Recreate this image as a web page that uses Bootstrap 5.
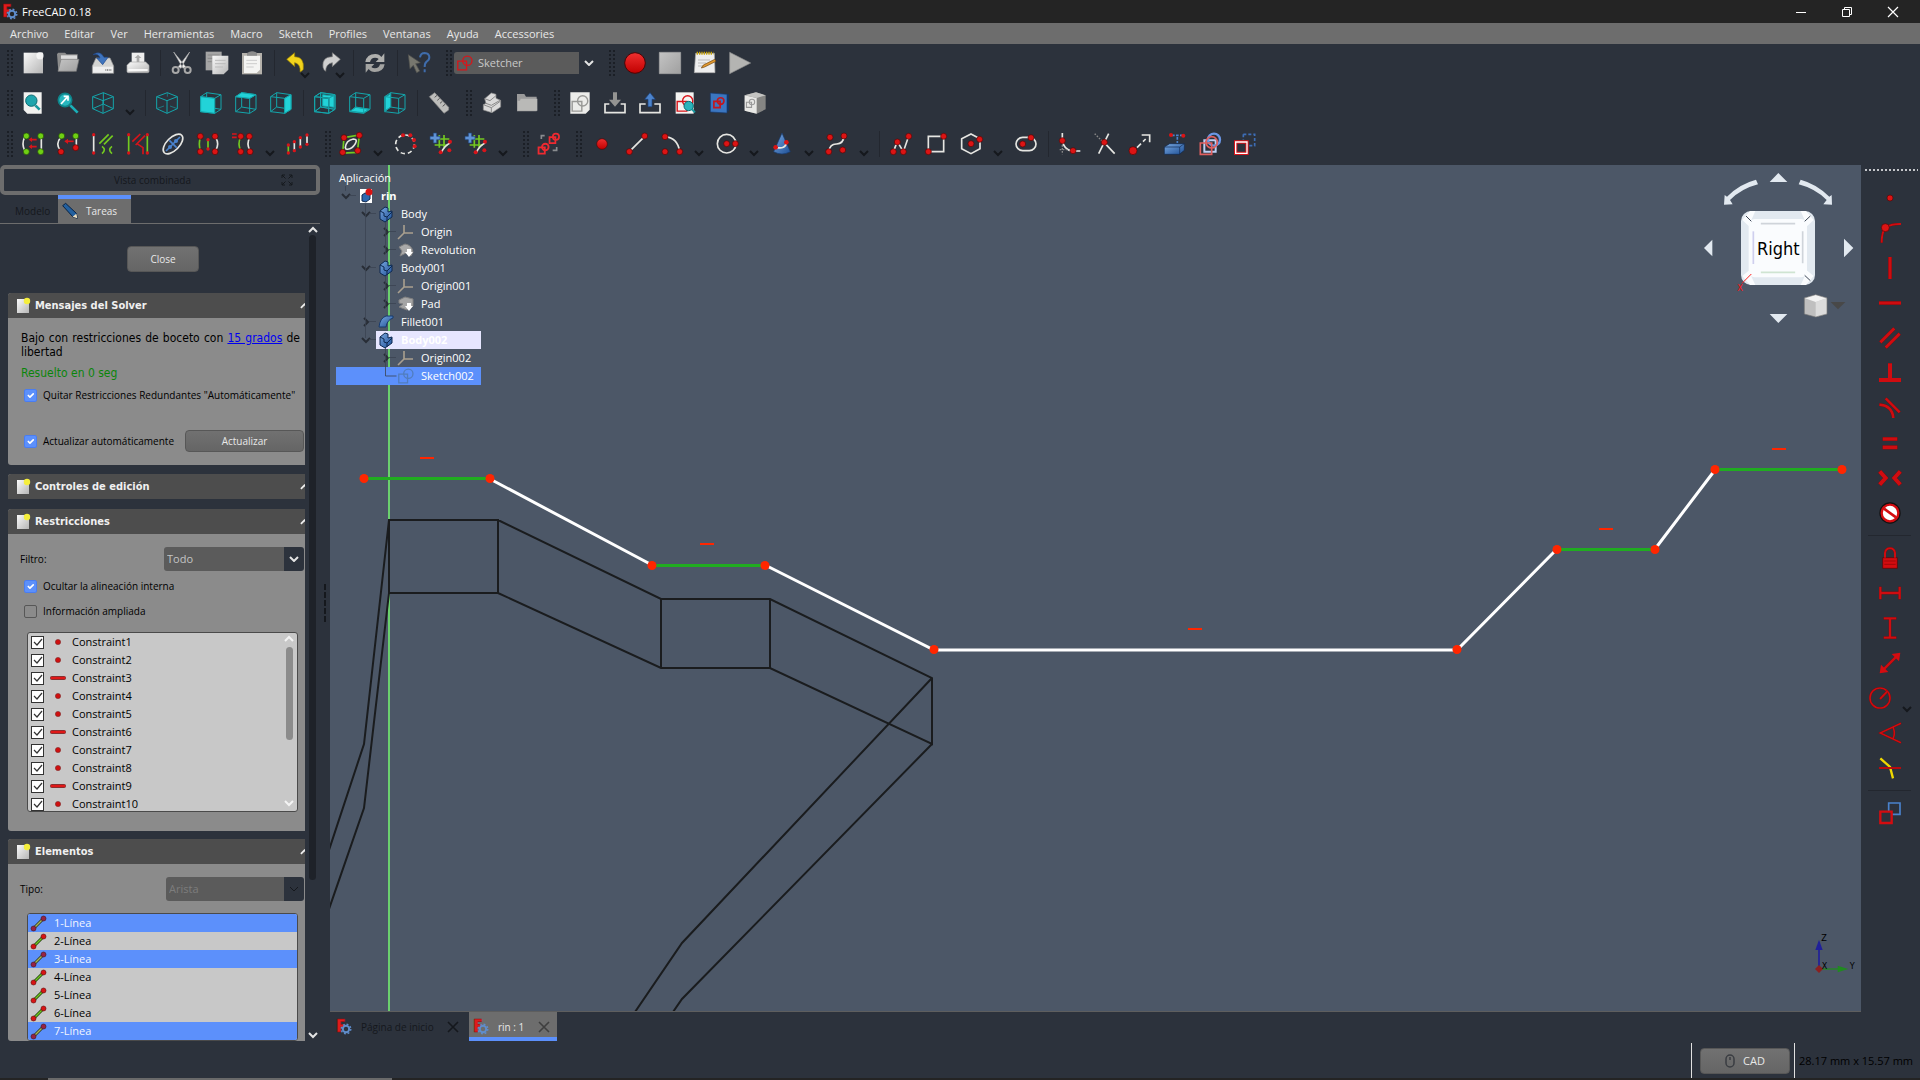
<!DOCTYPE html>
<html lang="es">
<head>
<meta charset="utf-8">
<meta name="viewport" content="width=device-width, initial-scale=1">
<title>FreeCAD 0.18</title>
<link href="https://cdn.jsdelivr.net/npm/bootstrap@5.3.0/dist/css/bootstrap.min.css" rel="stylesheet">
<style>
:root{--dock:#2c323c;--bar:#6d6d6d;--blue:#5c90fb;--ink:#15181d}
body{background:var(--dock);color:#e4e4e4;font:11px/14px "Open Sans","Noto Sans",sans-serif;overflow:hidden}
button{font:inherit;color:inherit}
svg{display:block;flex:none;overflow:visible}
.titlebar{background:#242424;height:23px;padding-left:2px;color:#fff}
.winbtn{width:46px;height:23px;border:0;background:none;color:#fff;padding:0}
.menubar{background:var(--bar);height:21px;padding-left:2px}
.menubar a{color:#e8e8e8;text-decoration:none;padding:0 8px;line-height:21px}
.toolrow{height:41px;padding-bottom:2px}
.toolrow:first-child{height:39px}
.tool{width:35px;height:35px;border:0;background:none;padding:0;display:flex;align-items:center;justify-content:center;position:relative}
.tool .more{position:absolute;right:3px;bottom:2px}
.drop{width:20px;height:35px;border:0;background:none;padding:19px 0 0 0;display:flex;align-items:center;justify-content:center}
.rule{width:9px;height:26px;flex:none;background:linear-gradient(#23272f,#23272f) 5px 0/1px 100% no-repeat}
.grip{width:18px;height:28px;flex:none;background:radial-gradient(circle,#1b1f26 1px,transparent 1px) right 1px top 0/4px 4px;background-clip:content-box;padding-left:9px}
.grip:first-child{width:15px;padding-left:7px}
.wb{height:22px;width:145px;border:0;border-radius:3px;color:#c9c9c9;appearance:none;padding:0 0 0 24px;
 background:url("data:image/svg+xml,%3Csvg xmlns='http://www.w3.org/2000/svg' viewBox='0 0 10 6'%3E%3Cpath d='M1 1l4 4 4-4' fill='none' stroke='%23e4e4e4' stroke-width='2'/%3E%3C/svg%3E") 130px 8px/10px 6px no-repeat,linear-gradient(#5b5b5b,#5b5b5b) 0 0/125px 100% no-repeat}
.wbicon{position:absolute;left:3px;top:3px;pointer-events:none}
.dock{width:330px;font:10px/14px "Open Sans","Noto Sans",sans-serif;color:#000}
.docktitle{width:320px;height:30px;border:4px solid var(--bar);border-radius:5px;color:var(--ink);padding-right:23px;padding-left:110px}
.docktabs{width:320px;height:29px;border-bottom:1px solid var(--bar)}
.docktab{border:0;background:none;padding:4px 0 0 15px;width:58px;text-align:left;color:var(--ink)}
.docktab.on{background:var(--bar);border-top:4px solid var(--blue);color:#e8e8e8;padding:0 0 0 4px;width:73px}
.scrollbody{width:320px}
.groups{width:305px;overflow:hidden;padding-left:8px}
.sbar{width:15px;padding:3px 0 3px}
.thumb{width:7px;height:645px;background:#1e2229;border-radius:4px;margin-top:2px}
.pbtn{border:1px solid #575757;border-radius:4px;background:linear-gradient(#717171,#656565);color:#e8e8e8;padding:0;text-align:center}
.close{width:72px;height:26px;margin:22px 0 21px 119px}
.grp{background:#8b8b8b;border-radius:3px 0 0 3px;margin-bottom:9px}
.grphead{height:25px;background:#4d4d4d;color:#f0f0f0;font:700 11px/14px "DejaVu Sans Condensed","DejaVu Sans",sans-serif;border-radius:3px 0 0 0;padding-left:9px}
.grphead .fold{margin-right:-4px}
.rich{font:12px/14px "DejaVu Sans Condensed","DejaVu Sans",sans-serif}
.dofmsg{text-align:justify;margin:0 5px 7px 13px;padding-top:13px}
.solved{color:#0a850a;margin:0 0 8px 13px}
.dofmsg a{color:#0000f0}
.tick{width:13px;height:13px;margin:0 6px 0 0;border:1px solid #575757;border-radius:2px!important;background-color:transparent;flex:none;float:none}
.tick:checked{background-color:var(--blue);border-color:#4a7df0}
.tick2{width:13px;height:13px;margin:0;border:1px solid #333;border-radius:0!important;background-color:#fff;flex:none}
.tick2:checked{border-color:#333;background-color:#fff;background-image:url("data:image/svg+xml,%3Csvg xmlns='http://www.w3.org/2000/svg' viewBox='0 0 11 11'%3E%3Cpath d='M2 5l3 3 5-6' fill='none' stroke='%23333' stroke-width='1.2'/%3E%3C/svg%3E")}
.ck{height:14px;margin-left:16px}
.combo{height:24px;width:140px;border:0;border-radius:3px;color:#c4c4c4;appearance:none;padding:0 0 0 3px;margin-right:1px;font-size:11px;
 background:url("data:image/svg+xml,%3Csvg xmlns='http://www.w3.org/2000/svg' viewBox='0 0 10 6'%3E%3Cpath d='M1 1l4 4 4-4' fill='none' stroke='%23e4e4e4' stroke-width='2'/%3E%3C/svg%3E") right 5px center/10px 6px no-repeat,linear-gradient(var(--dock),var(--dock)) right/20px 100% no-repeat,#5b5b5b}
.combo:disabled{opacity:1;width:138px;color:#7d7d7d;background:url("data:image/svg+xml,%3Csvg xmlns='http://www.w3.org/2000/svg' viewBox='0 0 10 6'%3E%3Cpath d='M1 1l4 4 4-4' fill='none' stroke='%2315181d' stroke-width='1'/%3E%3C/svg%3E") right 5px center/10px 6px no-repeat,linear-gradient(var(--dock),var(--dock)) right/20px 100% no-repeat,#5b5b5b}
.box{width:271px;margin-left:19px;border:1px solid #4a4a4a;border-radius:3px;background:#c8c8c8;font:11px/18px "Open Sans","Noto Sans",sans-serif;overflow:hidden}
.cons{height:180px}
.cons label,.elem li{height:18px}
.cons label{padding-left:3px}
.cons label svg{margin:0 6px}
.elem li{padding-left:3px;gap:8px}
.elem .sel{background:var(--blue);color:#f2f5ff}
.elem .sel svg{filter:hue-rotate(-20deg) saturate(.55)}
.thumb2{width:7px;height:93px;background:#8b8b8b;border-radius:4px;margin:5px 0 60px}
.splitter{width:5px;height:39px;background:repeating-linear-gradient(#15181d 0 6px,transparent 6px 8px) center/2px 100% no-repeat;position:absolute;left:322px;top:419px}
.stage{background:#4c5767;overflow:hidden;border-bottom:1px solid #5e5e5e}
.scene{position:absolute;inset:0;width:100%;height:100%}
.tree{position:absolute;left:6px;top:4px;width:145px;line-height:18px;color:#fff;margin:0;padding:0;list-style:none}
.tree li{display:flex;height:18px;align-items:center;position:relative;white-space:nowrap}
.tree .tw{width:20px;display:flex;justify-content:center;opacity:.65}
.tree .ic{width:20px;margin-right:5px;display:flex;justify-content:center}
.tree .l1{padding-left:20px}.tree .l2{padding-left:40px}
.tree .hot{background:linear-gradient(#e6e6ff,#e6e6ff) right/105px 100% no-repeat;font-weight:700}
.tree .pick{background:var(--blue)}
.treelines{position:absolute;left:6px;top:4px;margin-left:-6px;margin-top:-5px}
.cube{position:absolute;right:0;top:0}
.axes{position:absolute;right:0;bottom:0}
.doctabs{height:29px;font:10px/14px "Open Sans","Noto Sans",sans-serif}
.doctab{border:0;background:none;color:var(--ink);width:139px;padding:0 11px 0 6px}
.doctab.on{background:var(--bar);color:#e8e8e8;width:88px;border-bottom:4px solid var(--blue);padding:4px 8px 0 4px}
.rightbar{width:59px;padding-right:2px}
.dots{width:53px;height:2px;margin:4px 0 9px 3px;background:repeating-linear-gradient(90deg,#c4c6ca 0 2px,transparent 2px 4px)}
.hrule{width:43px;height:10px;background:linear-gradient(#23272f,#23272f) 0 5px/100% 1px no-repeat}
.radial{width:54px;align-self:flex-end;display:flex}
.status{height:37px;padding:2px 5px 0 0;color:#000}
.vline{width:1px;background:#e0e0e0;height:35px}
.cad{width:90px;height:26px;margin:0 4px 0 8px}
.taskbar{height:2px;background:#242424;padding-left:48px}
.taskbar div{width:344px;background:#6a6a6a}
.dim{margin-left:4px;width:116px}
.w,.r,.g,.c,.k,.b{fill:none;stroke-width:5}
.w{stroke:#e6e6e2}.r{stroke:#d8141a}.g{stroke:#73c920}.c{stroke:#14a5ab;stroke-width:3}.k{stroke:#15181d}.b{stroke:#4a82cc}
.cf{fill:#22d3d8;stroke:#14a5ab;stroke-width:3}
.red{stroke:#cf0c10;stroke-width:6;fill:none;filter:drop-shadow(0 0 2px #4b0505)}
#sk *{stroke-width:var(--sw,5)}
</style>
</head>
<body class="vh-100 d-flex flex-column">
<svg width="0" height="0" class="position-absolute" aria-hidden="true"><defs>
<linearGradient id="gr" x2="1" y2="1"><stop stop-color="#fafafa"/><stop offset="1" stop-color="#b5b5b5"/></linearGradient>
<linearGradient id="gs" x2="1" y2="1"><stop stop-color="#c4c4c4"/><stop offset="1" stop-color="#a0a0a0"/></linearGradient>
<linearGradient id="gb" x2="1" y2="1"><stop stop-color="#79a8e0"/><stop offset="1" stop-color="#1d4f96"/></linearGradient>
<linearGradient id="rg" x2="0" y2="1"><stop stop-color="#f03030"/><stop offset="1" stop-color="#c00000"/></linearGradient>
<circle id="rd" r="9" fill="#dc1414" stroke="#520606" stroke-width="2"/>
<circle id="gd" r="9" fill="#6fd014" stroke="#234d05" stroke-width="2"/>
<g id="chev"><path d="M1 1l4 4 4-4" fill="none" stroke="#15181d" stroke-width="2"/></g>
<g id="logo"><text x="0" y="13" font-family="Open Sans,sans-serif" font-weight="800" font-size="17" fill="#e01b1b" stroke="#8a0a0a" stroke-width=".4">F</text><circle cx="10" cy="10" r="3.2" fill="none" stroke="#5f8dcb" stroke-width="2"/><circle cx="10" cy="10" r="4.8" fill="none" stroke="#5f8dcb" stroke-width="1.4" stroke-dasharray="1.9 1.87"/></g>
<g id="wire"><path class="c" d="M2 14L44 19V64L2 59zM2 14L20 2L63 8L44 19M63 8V52L44 64M20 2V45L2 59M20 45L63 52"/></g>
<g id="grid"><path class="g" d="M28 6v38M42 6v38M14 18h44M14 36h40" stroke-width="4"/><path d="M10 0h10v10h10v10H20v10H10V20H0V10h10z" fill="#5f93d6" stroke="#23457a" stroke-width="2"/></g>
<g id="page"><path d="M0 1h12v14H0z" fill="url(#gr)"/><circle cx="10" cy="3" r="3.2" fill="#f5ee3c"/></g>
<g id="body"><path d="M2 5l5-4 3 1v4l4-1v6l-7 5-5-3z" fill="url(#gb)" stroke="#0e2950"/><path d="M2 5l4 2v3l3 1 5-5M9 11v4" fill="none" stroke="#0e2950"/></g>
<g id="org"><path d="M6 1v8h9M6 9l-6 6" fill="none" stroke="#aaa08f" stroke-width="1.6"/></g>
<g id="seg"><path d="M2.500 12.500L12.500 2.500" stroke="#1f3d0a" stroke-width="3"/><path d="M2.500 12.500L12.500 2.500" stroke="#73c920" stroke-width="1.500"/><circle cx="2.500" cy="12.500" r="2.500" fill="#d81414" stroke="#5a1010" stroke-width=".6"/><circle cx="12.500" cy="2.500" r="2.500" fill="#d81414" stroke="#5a1010" stroke-width=".6"/></g>
<g id="cdot"><circle cx="8" cy="7" r="2.600" fill="#d00f0f" stroke="#7c2a2a" stroke-width=".6"/></g>
<g id="cbar"><rect x=".5" y="5.500" width="15" height="3" rx="1" fill="#e01818" stroke="#8a3030"/></g>
<g id="sk"><path d="M3 24h34v34H3z" fill="none"/><circle cx="40" cy="22" r="18" fill="none"/></g>
</defs></svg>

<header class="titlebar d-flex align-items-center">
 <svg width="16" height="16" viewBox="0 0 16 16"><use href="#logo"/></svg><span class="ms-1 flex-grow-1">FreeCAD 0.18</span>
 <button class="winbtn" aria-label="Minimizar"><svg class="mx-auto" width="10" height="10" viewBox="0 0 10 10"><path d="M0 5.500h10" stroke="#fff"/></svg></button>
 <button class="winbtn" aria-label="Restaurar"><svg class="mx-auto" width="10" height="10" viewBox="0 0 10 10"><path d="M.5 2.500h7v7h-7zM2.500 2.500v-2h7v7h-2" fill="none" stroke="#fff"/></svg></button>
 <button class="winbtn" aria-label="Cerrar"><svg class="mx-auto" width="10" height="10" viewBox="0 0 10 10"><path d="M0 0l10 10M10 0L0 10" stroke="#fff" stroke-width="1.200"/></svg></button>
 <span class="pe-1"></span>
</header>
<nav class="menubar d-flex" aria-label="Menú">
 <a href="#">Archivo</a><a href="#">Editar</a><a href="#">Ver</a><a href="#">Herramientas</a><a href="#">Macro</a><a href="#">Sketch</a><a href="#">Profiles</a><a href="#">Ventanas</a><a href="#">Ayuda</a><a href="#">Accessories</a>
</nav>

<div>
<div class="toolrow d-flex align-items-center">
 <span class="grip"></span>
 <button class="tool" aria-label="Nuevo"><svg width="22" height="22" viewBox="0 0 66 66"><path d="M5 2h58v62H5z" fill="url(#gr)"/><circle cx="54" cy="11" r="11" fill="#fff" opacity=".7"/></svg></button>
 <button class="tool" aria-label="Abrir"><svg width="22" height="22" viewBox="0 0 66 66"><path d="M0 6l4-4h20l5 5h33v20L52 58H4z" fill="#8d8d8d"/><path d="M12 10h48v14H12z" fill="#ddd"/><path d="M12 22h54l-8 36H3z" fill="url(#gs)" stroke="#777" stroke-width="2"/></svg></button>
 <button class="tool" aria-label="Guardar"><svg width="22" height="22" viewBox="0 0 66 66"><path d="M12 18h42l11 24v22H1V42z" fill="#d4d4d2" stroke="#999" stroke-width="2"/><path d="M3 44h60v18H3z" fill="#eee"/><path d="M40 54h20" stroke="#777" stroke-width="5" stroke-dasharray="3 2"/><path d="M3 8Q24-6 36 16h12L32 38 14 18h10Q20 4 3 8z" fill="#3f74bd" stroke="#1f478a" stroke-width="2"/></svg></button>
 <button class="tool" aria-label="Imprimir"><svg width="22" height="22" viewBox="0 0 66 66"><path d="M14 2h38v34H14z" fill="#eee"/><path d="M33 8l10 10h-6v12h-8V18h-6z" fill="#aaa"/><path d="M10 30h46l10 10v18q0 4-4 4H4q-4 0-4-4V40z" fill="url(#gr)" stroke="#aaa" stroke-width="2"/><path d="M4 54h58" stroke="#fff" stroke-width="5"/></svg></button>
 <span class="rule"></span>
 <button class="tool" aria-label="Cortar"><svg width="22" height="22" viewBox="0 0 66 66"><path d="M8 0l36 44-8 5zM56 0L22 44l8 5z" fill="#f0f0f0" stroke="#aaa" stroke-width="2"/><circle cx="14" cy="54" r="9" fill="none" stroke="#a8a8a8" stroke-width="6"/><circle cx="50" cy="54" r="9" fill="none" stroke="#a8a8a8" stroke-width="6"/></svg></button>
 <button class="tool" aria-label="Copiar"><svg width="24" height="24" viewBox="0 0 72 72"><path d="M2 2h48v56H2z" fill="#a5a5a5"/><path d="M8 12h36M8 22h20M8 32h12" stroke="#888" stroke-width="3"/><path d="M22 14h48v42L56 70H22z" fill="url(#gr)"/><path d="M30 28h32M30 38h32M30 48h24" stroke="#bbb" stroke-width="3"/></svg></button>
 <button class="tool" aria-label="Pegar"><svg width="22" height="24" viewBox="0 0 66 72"><path d="M3 6h60v64H3z" fill="#b5b2ac"/><path d="M9 14h48v42L47 66H9z" fill="#f4f4f2"/><path d="M18 14V6q15-10 30 0v8z" fill="#8c8c8c"/><path d="M16 28h32M16 38h32M16 48h22" stroke="#ccc" stroke-width="3"/></svg></button>
 <span class="rule"></span>
 <button class="tool" aria-label="Deshacer"><svg width="20" height="22" viewBox="0 0 60 66"><path d="M2 22L26 2v12q30 0 26 38-4 6-10 8Q44 36 26 32v12z" fill="#f2d31c" stroke="#8a7405" stroke-width="2"/></svg><svg class="more" width="10" height="6"><use href="#chev"/></svg></button>
 <button class="tool" aria-label="Rehacer"><svg width="20" height="22" viewBox="0 0 60 66"><path d="M58 22L34 2v12Q2 14 6 46q2 8 8 12Q14 36 34 32v12z" fill="#cfcfcf" stroke="#777" stroke-width="2"/></svg><svg class="more" width="10" height="6"><use href="#chev"/></svg></button>
 <span class="rule"></span>
 <button class="tool" aria-label="Actualizar vista"><svg width="22" height="22" viewBox="0 0 66 66"><path d="M4 30Q8 6 34 6q12 0 18 9l9-11v26H35l9-9q-4-4-11-4-12 0-15 13z" fill="#b0b0ae"/><path d="M62 37Q58 60 32 60q-12 0-18-9L5 62V36h26l-9 9q4 4 11 4 12 0 15-12z" fill="#a4a4a2"/></svg></button>
 <span class="rule"></span>
 <button class="tool" aria-label="Qué es esto"><svg width="22" height="22" viewBox="0 0 66 66"><path d="M1 8l36 24-14 3 12 22-9 5-10-22L6 50z" fill="#77776f" stroke="#51514d" stroke-width="2"/><path d="M36 16Q38 3 50 3q14 1 14 13 0 8-8 13-6 4-6 16M50 52v9" fill="none" stroke="#3f6cab" stroke-width="6"/></svg></button>
 <span class="grip"></span>
 <div class="position-relative"><select class="wb" aria-label="Banco de trabajo"><option>Sketcher</option></select><svg class="wbicon" width="16" height="16" viewBox="0 0 62 62"><use href="#sk" stroke="#d8151a"/></svg></div>
 <span class="grip"></span>
 <button class="tool" aria-label="Grabar macro"><svg width="22" height="22" viewBox="0 0 66 66"><circle cx="33" cy="33" r="31" fill="url(#rg)" stroke="#4b0505" stroke-width="3"/></svg></button>
 <button class="tool" aria-label="Detener macro"><svg width="22" height="22" viewBox="0 0 66 66"><path d="M1 1h64v64H1z" fill="url(#gs)" stroke="#a8a8a8" stroke-width="2"/></svg></button>
 <button class="tool" aria-label="Editar macros"><svg width="22" height="22" viewBox="0 0 66 66"><path d="M5 4h56l2 58H1z" fill="#eee" stroke="#aaa" stroke-width="2"/><path d="M8 4h50" stroke="#c9a40b" stroke-width="9" stroke-dasharray="4 3"/><path d="M12 24h36M12 33h24M12 42h20" stroke="#bbb" stroke-width="3"/><path d="M22 48l6-9 34-17 4 6-34 17z" fill="#e0982f" stroke="#6e430a" stroke-width="2"/></svg></button>
 <button class="tool" aria-label="Ejecutar macro"><svg width="22" height="22" viewBox="0 0 66 66"><path d="M2 1l63 32L2 65z" fill="#b4b4b2" stroke="#8d8d8d" stroke-width="2"/></svg></button>
</div>

<div class="toolrow d-flex align-items-center">
 <span class="grip"></span>
 <button class="tool" aria-label="Ajustar todo"><svg width="22" height="22" viewBox="0 0 66 66"><path d="M5 1h54v64H16L5 54z" fill="#f2f2f0"/><circle cx="28" cy="26" r="17" fill="#1fa5ad" stroke="#0c6b72" stroke-width="3"/><path d="M40 40l13 13" stroke="#17989f" stroke-width="8"/></svg></button>
 <button class="tool" aria-label="Ajustar selección"><svg width="22" height="22" viewBox="0 0 66 66"><circle cx="24" cy="24" r="20" fill="#27b6be" stroke="#0e8389" stroke-width="5"/><path d="M40 40l22 22" stroke="#1bb0b8" stroke-width="8"/><path d="M12 36L32 14M20 13h13v13" fill="none" stroke="#fff" stroke-width="5"/></svg></button>
 <button class="tool" aria-label="Estilo de dibujo"><svg width="22" height="22" viewBox="0 0 66 66"><path class="c" d="M2 14L34 2L64 14V50L33 64L2 50zM2 14L33 26L64 14M33 26V64M2 50L34 36L64 50M34 2V36"/></svg></button>
 <button class="drop" aria-label="Más estilos"><svg width="10" height="6"><use href="#chev"/></svg></button>
 <span class="rule"></span>
 <button class="tool" aria-label="Isométrica"><svg width="22" height="22" viewBox="0 0 66 66"><path class="c" d="M2 14L34 2L64 14V50L33 64L2 50zM2 14L33 26L64 14M33 26V64"/><path class="c" opacity=".6" d="M2 50L24 42M42 42L64 50M34 2V14"/></svg></button>
 <span class="rule"></span>
 <button class="tool" aria-label="Alzado"><svg width="22" height="22" viewBox="0 0 66 66"><use href="#wire"/><path class="cf" d="M2 14L44 19V64L2 59z"/></svg></button>
 <button class="tool" aria-label="Planta"><svg width="22" height="22" viewBox="0 0 66 66"><use href="#wire"/><path class="cf" d="M2 14L20 2L63 8L44 19z"/></svg></button>
 <button class="tool" aria-label="Derecha"><svg width="22" height="22" viewBox="0 0 66 66"><use href="#wire"/><path class="cf" d="M44 19L63 8V52L44 64z"/></svg></button>
 <span class="rule"></span>
 <button class="tool" aria-label="Posterior"><svg width="22" height="22" viewBox="0 0 66 66"><path class="cf" d="M26 8L60 12V46L26 42z"/><use href="#wire"/><path d="M2 14L44 19V64" fill="none" stroke="#1d5d66" stroke-width="4"/><use href="#wire"/></svg></button>
 <button class="tool" aria-label="Inferior"><svg width="22" height="22" viewBox="0 0 66 66"><path class="cf" d="M4 58L20 46L60 52L44 62z"/><use href="#wire"/></svg></button>
 <button class="tool" aria-label="Izquierda"><svg width="22" height="22" viewBox="0 0 66 66"><path class="cf" d="M4 16L20 5V45L4 56z"/><use href="#wire"/></svg></button>
 <span class="rule"></span>
 <button class="tool" aria-label="Medir"><svg width="22" height="22" viewBox="0 0 66 66"><path d="M4 14L20 2L62 46V54L48 64z" fill="#bdbdbb" stroke="#888" stroke-width="2"/><path d="M20 16l7-6M28 25l7-6M36 34l7-6M44 43l7-6" stroke="#555" stroke-width="3"/></svg></button>
 <span class="grip"></span>
 <button class="tool" aria-label="Crear pieza"><svg width="20" height="22" viewBox="0 0 60 66"><path d="M8 20L28 3l14 4v12l14 6v20L30 62 4 54V38l8-4z" fill="#dadada" stroke="#8a8a8a" stroke-width="2"/><path d="M8 20l16 6 18-15M12 34l16 6 26-15M4 38l24 9 28-20M28 47v14" fill="none" stroke="#8a8a8a" stroke-width="3"/></svg></button>
 <button class="tool" aria-label="Crear grupo"><svg width="22" height="22" viewBox="0 0 66 66"><path d="M3 6h22l5 8h32v44H3z" fill="#9a9a9a"/><path d="M14 20h50v36H5V26h7z" fill="#b9b9b7"/></svg></button>
 <span class="grip"></span>
 <button class="tool" aria-label="Crear croquis"><svg width="22" height="22" viewBox="0 0 66 66"><path d="M4 1h58v52L50 65H4z" fill="#ececea"/><g transform="translate(7 8) scale(.85)"><use href="#sk" stroke="#999997"/></g></svg></button>
 <button class="tool" aria-label="Editar croquis"><svg width="22" height="22" viewBox="0 0 66 66"><path d="M16 36H3v26h60V36H50" class="w"/><path d="M27 1h12v22h12L33 44 15 23h12z" fill="#949492"/></svg></button>
 <button class="tool" aria-label="Salir del croquis"><svg width="22" height="22" viewBox="0 0 66 66"><path d="M20 36H3v26h60V36H46" class="w"/><path d="M27 44V22H17L33 2l16 20H39v22z" fill="#4c83cb" stroke="#1d4480" stroke-width="2"/></svg></button>
 <button class="tool" aria-label="Ver croquis"><svg width="22" height="22" viewBox="0 0 66 66"><path d="M5 1h54v64H5z" fill="#f4f4f2"/><g transform="translate(7 8) scale(.85)"><use href="#sk" stroke="#d8141a"/></g><circle cx="44" cy="42" r="14" fill="#2bb4bb" stroke="#0c6b72" stroke-width="3"/><path d="M53 51l10 10" stroke="#17989f" stroke-width="6"/></svg></button>
 <button class="tool" aria-label="Ver sección"><svg width="22" height="22" viewBox="0 0 66 66"><path d="M14 6h46v52H14z" fill="#16355f"/><path d="M4 3l50 4v56L4 60z" fill="#3b76c0" stroke="#173a6d" stroke-width="2"/><g transform="translate(13 15) scale(.55)" style="--sw:9"><use href="#sk" stroke="#c4161c"/></g></svg></button>
 <button class="tool" aria-label="Asignar croquis a cara"><svg width="22" height="22" viewBox="0 0 66 66"><path d="M2 10L36 1l29 9v42L38 65 2 56z" fill="#858583"/><path d="M2 10L38 18V65L2 56z" fill="#e8e8e6"/><path d="M2 10L36 1l29 9-27 8z" fill="#c4c4c2"/><g transform="translate(6 20) scale(.45)" style="--sw:7"><use href="#sk" stroke="#999"/></g></svg></button>
</div>

<div class="toolrow d-flex align-items-center">
 <span class="grip"></span>
 <button class="tool" aria-label="Cerrar forma"><svg width="22" height="22" viewBox="0 0 66 66"><path class="w" d="M8 12Q-2 33 8 52M58 12V52"/><path class="r" d="M24 20h20M24 41h20"/><path d="M20 20l10-7v14zM20 41l10-7v14z" fill="#d8141a"/><use href="#gd" x="13" y="9"/><use href="#gd" x="56" y="9"/><use href="#gd" x="13" y="56"/><use href="#gd" x="56" y="56"/></svg></button>
 <button class="tool" aria-label="Conectar aristas"><svg width="22" height="22" viewBox="0 0 66 66"><path class="w" d="M12 12Q-6 33 10 52M58 12V40"/><path class="r" d="M26 25h24"/><path d="M22 25l11-8v16z" fill="#d8141a"/><use href="#gd" x="14" y="9"/><use href="#gd" x="56" y="9"/><use href="#rd" x="12" y="56"/><use href="#rd" x="56" y="44"/></svg></button>
 <button class="tool" aria-label="Seleccionar restricciones"><svg width="22" height="22" viewBox="0 0 66 66"><path class="w" d="M5 6v54"/><path class="g" d="M22 32L50 4M36 34L62 8M30 40q14 10 0 22M60 40q-14 10 0 22"/><circle cx="5" cy="5" r="5" fill="#d8141a"/><circle cx="5" cy="60" r="5" fill="#d8141a"/></svg></button>
 <button class="tool" aria-label="Seleccionar elementos"><svg width="22" height="22" viewBox="0 0 66 66"><path class="g" d="M5 6v54M61 6v54"/><path class="r" d="M16 26L40 3M26 36L54 8M30 32L48 44V64"/><circle cx="5" cy="5" r="5" fill="#d8141a"/><circle cx="5" cy="60" r="5" fill="#d8141a"/><circle cx="61" cy="5" r="5" fill="#d8141a"/><circle cx="61" cy="60" r="5" fill="#d8141a"/></svg></button>
 <button class="tool" aria-label="Geometría interna"><svg width="22" height="22" viewBox="0 0 66 66"><ellipse class="w" cx="33" cy="33" rx="37" ry="19" transform="rotate(-45 33 33)"/><path class="b" d="M12 54L54 12M22 22l22 22"/><circle cx="24" cy="42" r="6" fill="#4a82cc"/><circle cx="42" cy="24" r="6" fill="#4a82cc"/></svg></button>
 <button class="tool" aria-label="Simetría"><svg width="22" height="22" viewBox="0 0 66 66"><path class="g" d="M10 14Q4 33 10 52M33 20v30"/><path class="w" d="M56 14Q68 33 56 52"/><use href="#rd" x="10" y="10"/><use href="#rd" x="54" y="10"/><use href="#rd" x="10" y="56"/><use href="#rd" x="54" y="56"/><circle cx="33" cy="20" r="5" fill="#d8141a"/><circle cx="33" cy="48" r="5" fill="#d8141a"/></svg></button>
 <button class="tool" aria-label="Clonar"><svg width="22" height="22" viewBox="0 0 66 66"><path class="g" d="M26 12Q16 33 26 52"/><path class="w" d="M54 12Q42 33 54 52"/><path class="r" d="M0 3h14M0 13h14"/><use href="#rd" x="26" y="10"/><use href="#rd" x="52" y="10"/><use href="#rd" x="26" y="56"/><use href="#rd" x="54" y="56"/></svg></button>
 <button class="drop" aria-label="Más"><svg width="10" height="6"><use href="#chev"/></svg></button>
 <button class="tool" aria-label="Matriz rectangular"><svg width="22" height="22" viewBox="0 0 66 66"><path class="g" d="M4 36v24"/><path class="w" d="M22 28v24M40 16v24M60 8v24"/><g fill="#d8141a"><circle cx="4" cy="36" r="5"/><circle cx="4" cy="60" r="5"/><circle cx="22" cy="26" r="5"/><circle cx="22" cy="53" r="5"/><circle cx="40" cy="14" r="5"/><circle cx="40" cy="42" r="5"/><circle cx="60" cy="6" r="5"/><circle cx="60" cy="34" r="5"/></g></svg></button>
 <span class="grip"></span>
 <button class="tool" aria-label="Información B-spline"><svg width="22" height="22" viewBox="0 0 66 66"><path class="g" d="M12 14L58 6L52 58L8 60z"/><path class="w" d="M16 44Q18 22 40 18Q54 18 46 32Q34 52 18 48z"/><use href="#rd" x="12" y="14"/><use href="#rd" x="58" y="7"/><use href="#rd" x="53" y="53"/><use href="#rd" x="8" y="58"/></svg></button>
 <button class="drop" aria-label="Más"><svg width="10" height="6"><use href="#chev"/></svg></button>
 <button class="tool" aria-label="Polígono de control"><svg width="22" height="22" viewBox="0 0 66 66"><circle class="w" cx="30" cy="34" r="28" stroke-dasharray="13 9"/><g fill="#d8141a"><circle cx="24" cy="7" r="6"/><circle cx="46" cy="7" r="6"/><circle cx="57" cy="21" r="6"/><circle cx="59" cy="40" r="6"/></g></svg></button>
 <button class="tool" aria-label="Aumentar grado"><svg width="22" height="22" viewBox="0 0 66 66"><use href="#grid"/><path class="w" d="M34 58Q44 38 60 30"/><circle cx="32" cy="58" r="6" fill="#d8141a"/><circle cx="60" cy="26" r="6" fill="#d8141a"/><circle cx="58" cy="52" r="6" fill="#d8141a"/></svg></button>
 <button class="tool" aria-label="Insertar nudo"><svg width="22" height="22" viewBox="0 0 66 66"><use href="#grid"/><path class="w" d="M34 58Q44 38 60 30"/><circle cx="32" cy="58" r="6" fill="#d8141a"/><circle cx="60" cy="26" r="6" fill="#d8141a"/><circle cx="58" cy="52" r="6" fill="#d8141a"/></svg></button>
 <button class="drop" aria-label="Más"><svg width="10" height="6"><use href="#chev"/></svg></button>
 <span class="grip"></span>
 <button class="tool" aria-label="Espacio virtual"><svg width="22" height="22" viewBox="0 0 66 66"><g stroke="#ee2a30" style="--sw:10"><g transform="translate(0 30) scale(.55)"><use href="#sk"/></g><g transform="translate(33 0) scale(.52)"><use href="#sk"/></g></g><path class="w" d="M10 18V8h10M56 42v10H44" opacity=".5"/></svg></button>
 <span class="grip"></span>
 <button class="tool" aria-label="Punto"><svg width="22" height="22" viewBox="0 0 66 66"><circle cx="33" cy="33" r="16" fill="url(#rg)" stroke="#520606" stroke-width="2"/></svg></button>
 <button class="tool" aria-label="Línea"><svg width="22" height="22" viewBox="0 0 66 66"><path class="w" d="M10 56L56 10"/><use href="#rd" x="10" y="56"/><use href="#rd" x="56" y="9"/></svg></button>
 <button class="tool" aria-label="Arco"><svg width="22" height="22" viewBox="0 0 66 66"><path class="w" d="M12 11Q50 14 56 56"/><use href="#rd" x="12" y="11"/><use href="#rd" x="12" y="56"/><use href="#rd" x="56" y="56"/></svg></button>
 <button class="drop" aria-label="Más arcos"><svg width="10" height="6"><use href="#chev"/></svg></button>
 <button class="tool" aria-label="Círculo"><svg width="22" height="22" viewBox="0 0 66 66"><circle class="w" cx="32" cy="32" r="28"/><use href="#rd" x="32" y="32"/><use href="#rd" x="58" y="32"/></svg></button>
 <button class="drop" aria-label="Más círculos"><svg width="10" height="6"><use href="#chev"/></svg></button>
 <button class="tool" aria-label="Cónica"><svg width="22" height="22" viewBox="0 0 66 66"><path d="M33 0L58 56Q33 70 8 56z" fill="url(#gb)" stroke="#173a6d" stroke-width="2"/><path class="w" d="M14 43Q44 50 46 28"/><circle cx="14" cy="43" r="7" fill="#dc1414"/><circle cx="46" cy="28" r="7" fill="#dc1414"/></svg></button>
 <button class="drop" aria-label="Más cónicas"><svg width="10" height="6"><use href="#chev"/></svg></button>
 <button class="tool" aria-label="B-spline"><svg width="22" height="22" viewBox="0 0 66 66"><path class="w" d="M8 56Q12 32 32 33Q52 32 54 10"/><use href="#rd" x="12" y="13"/><use href="#rd" x="54" y="9"/><use href="#rd" x="8" y="56"/><use href="#rd" x="50" y="51"/></svg></button>
 <button class="drop" aria-label="Más splines"><svg width="10" height="6"><use href="#chev"/></svg></button>
 <span class="rule"></span>
 <button class="tool" aria-label="Polilínea"><svg width="22" height="22" viewBox="0 0 66 66"><path class="w" d="M10 56L22 26L40 56L56 10"/><use href="#rd" x="10" y="56"/><use href="#rd" x="22" y="27"/><use href="#rd" x="40" y="56"/><use href="#rd" x="56" y="10"/></svg></button>
 <button class="tool" aria-label="Rectángulo"><svg width="22" height="22" viewBox="0 0 66 66"><path class="w" d="M10 10h46v46H10z"/><use href="#rd" x="10" y="56"/><use href="#rd" x="56" y="10"/></svg></button>
 <button class="tool" aria-label="Polígono"><svg width="22" height="22" viewBox="0 0 66 66"><path class="w" d="M33 3L60 17V47L33 62L5 47V17z"/><use href="#rd" x="33" y="32"/><use href="#rd" x="59" y="19"/></svg></button>
 <button class="drop" aria-label="Más polígonos"><svg width="10" height="6"><use href="#chev"/></svg></button>
 <button class="tool" aria-label="Ranura"><svg width="22" height="22" viewBox="0 0 66 66"><rect class="w" x="3" y="13" width="60" height="40" rx="20"/><use href="#rd" x="23" y="33"/><use href="#rd" x="48" y="14"/></svg></button>
 <span class="rule"></span>
 <button class="tool" aria-label="Redondeo"><svg width="22" height="22" viewBox="0 0 66 66"><path class="w" d="M10 0V22Q14 50 40 54H64"/><path d="M2 50h24M10 36v28" stroke="#888" stroke-width="4" stroke-dasharray="5 4"/><use href="#rd" x="10" y="23"/><use href="#rd" x="42" y="53"/></svg></button>
 <button class="tool" aria-label="Recortar"><svg width="22" height="22" viewBox="0 0 66 66"><path class="w" d="M44 2L14 62M30 28L62 62"/><path d="M2 2L26 26" stroke="#888" stroke-width="4" stroke-dasharray="5 4"/><use href="#rd" x="31" y="28"/></svg></button>
 <button class="tool" aria-label="Extender"><svg width="22" height="22" viewBox="0 0 66 66"><path class="w" d="M38 6H62V28M24 44L36 32M42 26L50 18"/><circle cx="12" cy="53" r="12" fill="#dc1414" stroke="#520606" stroke-width="2"/></svg></button>
 <button class="tool" aria-label="Geometría externa"><svg width="22" height="22" viewBox="0 0 66 66"><path d="M1 42l16-10h44v20L46 64H1z" fill="url(#gb)" stroke="#10294e" stroke-width="2"/><path d="M1 42h46l14-10M47 42v22" fill="none" stroke="#10294e" stroke-width="2"/><path class="b" d="M24 7h30M40 12v18" stroke-dasharray="8 4"/><circle cx="21" cy="6" r="6" fill="#dc1414"/><circle cx="58" cy="8" r="6" fill="#dc1414"/></svg></button>
 <button class="tool" aria-label="Copia de carbón"><svg width="22" height="22" viewBox="0 0 66 66"><path d="M16 22h34v34H16z" fill="none" stroke="#bcd0f5" stroke-width="6"/><circle cx="45" cy="20" r="18" fill="none" stroke="#6a96e4" stroke-width="7"/><path d="M4 30h34v34H4z" fill="none" stroke="#e06060" stroke-width="5"/><circle cx="38" cy="28" r="17" fill="none" stroke="#e06060" stroke-width="5"/></svg></button>
 <button class="tool" aria-label="Modo construcción"><svg width="22" height="22" viewBox="0 0 66 66"><path d="M28 4h34v34H46M28 4v16" fill="none" stroke="#3d6db5" stroke-width="5" stroke-dasharray="9 6"/><path d="M5 27h34v34H5z" fill="none" stroke="#d8141a" stroke-width="10"/><path d="M5 27h34v34H5z" fill="none" stroke="#fff" stroke-width="4"/></svg></button>
</div>
</div>

<main class="d-flex flex-grow-1 position-relative" style="min-height:0">
 <aside class="dock d-flex flex-column flex-shrink-0">
  <div class="docktitle d-flex align-items-center justify-content-between flex-shrink-0"><span>Vista combinada</span><svg width="12" height="12" viewBox="0 0 12 12"><path d="M4.500 4.500L1 1M1 4V1h3M7.500 4.500L11 1M8 1h3v3M4.500 7.500L1 11M1 8v3h3M7.500 7.500L11 11M11 8v3H8" fill="none" stroke="#15181d"/></svg></div>
  <div class="docktabs d-flex flex-shrink-0"><button class="docktab">Modelo</button><button class="docktab on d-flex align-items-center"><svg width="16" height="16" viewBox="0 0 48 48"><path d="M2 8l9-7 32 30 3 15-14-5z" fill="#23609f" stroke="#0b2240" stroke-width="3"/><path d="M43 32l3 14-14-5z" fill="#f0e0c0"/></svg><span class="ms-2 fs-inherit">Tareas</span></button></div>
  <div class="scrollbody d-flex flex-grow-1" style="min-height:0">
   <div class="groups">
    <button class="pbtn close d-block">Close</button>
    <section class="grp" style="height:172px">
     <div class="grphead d-flex align-items-center"><svg width="14" height="16" viewBox="0 0 14 16"><use href="#page"/></svg><span class="ms-1 flex-grow-1">Mensajes del Solver</span><svg class="fold" width="9" height="6" viewBox="0 0 10 6"><path d="M1 5l4-4 4 4" fill="none" stroke="#eee" stroke-width="2"/></svg></div>
     <p class="dofmsg rich"><span>Bajo con restricciones de boceto con</span> <a href="#">15 grados</a> <span>de</span> <span>libertad</span></p>
     <p class="solved rich">Resuelto en 0 seg</p>
     <div class="ck d-flex align-items-center text-nowrap"><input class="form-check-input tick" type="checkbox" id="c1" checked><label for="c1">Quitar Restricciones Redundantes "Automáticamente"</label></div>
     <div class="d-flex align-items-center justify-content-between mt-4 pt-1"><div class="ck d-flex align-items-center"><input class="form-check-input tick" type="checkbox" id="c2" checked><label for="c2">Actualizar automáticamente</label></div><button class="pbtn" style="width:119px;height:22px;margin-right:1px">Actualizar</button></div>
    </section>
    <section class="grp" style="margin-bottom:10px">
     <div class="grphead d-flex align-items-center"><svg width="14" height="16" viewBox="0 0 14 16"><use href="#page"/></svg><span class="ms-1 flex-grow-1">Controles de edición</span><svg class="fold" width="9" height="6" viewBox="0 0 10 6"><path d="M1 5l4-4 4 4" fill="none" stroke="#eee" stroke-width="2"/></svg></div>
    </section>
    <section class="grp pb-3" style="margin-bottom:8px">
     <div class="grphead d-flex align-items-center"><svg width="14" height="16" viewBox="0 0 14 16"><use href="#page"/></svg><span class="ms-1 flex-grow-1">Restricciones</span><svg class="fold" width="9" height="6" viewBox="0 0 10 6"><path d="M1 5l4-4 4 4" fill="none" stroke="#eee" stroke-width="2"/></svg></div>
     <div class="d-flex align-items-center justify-content-between" style="padding:13px 0 8px 12px"><label for="flt">Filtro:</label><select id="flt" class="combo"><option>Todo</option></select></div>
     <div class="ck d-flex align-items-center"><input class="form-check-input tick" type="checkbox" id="c3" checked><label for="c3">Ocultar la alineación interna</label></div>
     <div class="ck d-flex align-items-center" style="margin-top:11px"><input class="form-check-input tick" type="checkbox" id="c4"><label for="c4">Información ampliada</label></div>
     <div class="box cons d-flex justify-content-between" style="margin-top:14px">
      <div>
       <label class="d-flex align-items-center"><input class="form-check-input tick2" type="checkbox" checked><svg width="16" height="14"><use href="#cdot"/></svg>Constraint1</label>
       <label class="d-flex align-items-center"><input class="form-check-input tick2" type="checkbox" checked><svg width="16" height="14"><use href="#cdot"/></svg>Constraint2</label>
       <label class="d-flex align-items-center"><input class="form-check-input tick2" type="checkbox" checked><svg width="16" height="14"><use href="#cbar"/></svg>Constraint3</label>
       <label class="d-flex align-items-center"><input class="form-check-input tick2" type="checkbox" checked><svg width="16" height="14"><use href="#cdot"/></svg>Constraint4</label>
       <label class="d-flex align-items-center"><input class="form-check-input tick2" type="checkbox" checked><svg width="16" height="14"><use href="#cdot"/></svg>Constraint5</label>
       <label class="d-flex align-items-center"><input class="form-check-input tick2" type="checkbox" checked><svg width="16" height="14"><use href="#cbar"/></svg>Constraint6</label>
       <label class="d-flex align-items-center"><input class="form-check-input tick2" type="checkbox" checked><svg width="16" height="14"><use href="#cdot"/></svg>Constraint7</label>
       <label class="d-flex align-items-center"><input class="form-check-input tick2" type="checkbox" checked><svg width="16" height="14"><use href="#cdot"/></svg>Constraint8</label>
       <label class="d-flex align-items-center"><input class="form-check-input tick2" type="checkbox" checked><svg width="16" height="14"><use href="#cbar"/></svg>Constraint9</label>
       <label class="d-flex align-items-center"><input class="form-check-input tick2" type="checkbox" checked><svg width="16" height="14"><use href="#cdot"/></svg>Constraint10</label>
      </div>
      <div class="d-flex flex-column align-items-center" style="padding:3px 3px 0 0"><svg width="10" height="6"><path d="M1 5l4-4 4 4" fill="none" stroke="#f4f4f4" stroke-width="2"/></svg><div class="thumb2"></div><svg width="10" height="6"><path d="M1 1l4 4 4-4" fill="none" stroke="#f4f4f4" stroke-width="2"/></svg></div>
     </div>
     <div style="height:3px"></div>
    </section>
    <section class="grp mb-0">
     <div class="grphead d-flex align-items-center"><svg width="14" height="16" viewBox="0 0 14 16"><use href="#page"/></svg><span class="ms-1 flex-grow-1">Elementos</span><svg class="fold" width="9" height="6" viewBox="0 0 10 6"><path d="M1 5l4-4 4 4" fill="none" stroke="#eee" stroke-width="2"/></svg></div>
     <div class="d-flex align-items-center justify-content-between" style="padding:13px 0 12px 12px"><label for="typ">Tipo:</label><select id="typ" class="combo" disabled><option>Arista</option></select></div>
     <ul class="box elem list-unstyled mb-0">
      <li class="sel d-flex align-items-center"><svg width="15" height="15"><use href="#seg"/></svg>1-Línea</li>
      <li class="d-flex align-items-center"><svg width="15" height="15"><use href="#seg"/></svg>2-Línea</li>
      <li class="sel d-flex align-items-center"><svg width="15" height="15"><use href="#seg"/></svg>3-Línea</li>
      <li class="d-flex align-items-center"><svg width="15" height="15"><use href="#seg"/></svg>4-Línea</li>
      <li class="d-flex align-items-center"><svg width="15" height="15"><use href="#seg"/></svg>5-Línea</li>
      <li class="d-flex align-items-center"><svg width="15" height="15"><use href="#seg"/></svg>6-Línea</li>
      <li class="sel d-flex align-items-center"><svg width="15" height="15"><use href="#seg"/></svg>7-Línea</li>
     </ul>
    </section>
   </div>
   <div class="sbar d-flex flex-column align-items-center"><svg width="10" height="6"><path d="M1 5l4-4 4 4" fill="none" stroke="#e4e4e4" stroke-width="2"/></svg><div class="thumb"></div><svg class="mt-auto" width="10" height="6"><path d="M1 1l4 4 4-4" fill="none" stroke="#e4e4e4" stroke-width="2"/></svg></div>
  </div>
  <span class="splitter"></span>
 </aside>

 <div class="d-flex flex-column flex-grow-1" style="min-width:0">
  <div class="stage position-relative flex-grow-1">
   <svg class="scene" viewBox="330 165 1531 846" preserveAspectRatio="xMinYMin slice">
    <path d="M389 165V1012" stroke="#6bd06e" stroke-width="2"/>
    <g fill="none" stroke="#1a1c1e" stroke-width="2">
     <path d="M389 520H498V593H389zM498 520L661 599H770L932 678V744L770 668H661L498 593M661 599V668M770 599V668"/>
     <path d="M389 520L364 744L329 850M389 593L364 808L329 909M932 678L682 943L635 1012M932 744L682 999L673 1012"/>
    </g>
    <g fill="none" stroke-width="3"><path d="M490 479L652 565M765 565L934 650H1457L1557 549M1655 549L1715 470" stroke="#fff"/>
    <path d="M364 478.500H490M652 565.500H765M1557 549.500H1655M1715 469.500H1842" stroke="#20ac20"/></g>
    <path d="M420 458h14M700 544h14M1188 629h14M1599 529h14M1772 449h14" stroke="#ff2600" stroke-width="2"/>
    <g fill="#ff2600"><circle cx="364" cy="478.500" r="4.500"/><circle cx="490" cy="478.500" r="4.500"/><circle cx="652" cy="565.500" r="4.500"/><circle cx="765" cy="565.500" r="4.500"/><circle cx="934" cy="649.500" r="4.500"/><circle cx="1457" cy="649.500" r="4.500"/><circle cx="1557" cy="549.500" r="4.500"/><circle cx="1655" cy="549.500" r="4.500"/><circle cx="1715" cy="469.500" r="4.500"/><circle cx="1842" cy="469.500" r="4.500"/></g>
   </svg>
   <ul class="tree">
    <li style="padding-left:3px">Aplicación</li>
    <li class="fw-bold"><span class="tw"><svg width="10" height="6"><use href="#chev"/></svg></span><span class="ic"><svg width="14" height="16"><path d="M1 1h12v14H1z" fill="#fff"/><path d="M3 7l3-2 5 1v5l-4 3-4-1z" fill="#2f67ae" stroke="#10294e"/><circle cx="10" cy="4" r="3.500" fill="#d81414"/></svg></span>rin</li>
    <li class="l1"><span class="tw"><svg width="10" height="6"><use href="#chev"/></svg></span><span class="ic"><svg width="16" height="16"><use href="#body"/></svg></span>Body</li>
    <li class="l2"><span class="tw"><svg width="6" height="10"><path d="M1 1l4 4-4 4" class="k" style="stroke-width:2px"/></svg></span><span class="ic"><svg width="16" height="16"><use href="#org"/></svg></span>Origin</li>
    <li class="l2"><span class="tw"><svg width="6" height="10"><path d="M1 1l4 4-4 4" class="k" style="stroke-width:2px"/></svg></span><span class="ic"><svg width="16" height="16"><path d="M1 5l6-3q7 1 8 8l-2 4-5-3-6 3 2-5z" fill="#aaa" stroke="#808080"/><path d="M9 7h4v3h2l-4 5-4-5h2z" fill="#fff"/></svg></span>Revolution</li>
    <li class="l1"><span class="tw"><svg width="10" height="6"><use href="#chev"/></svg></span><span class="ic"><svg width="16" height="16"><use href="#body"/></svg></span>Body001</li>
    <li class="l2"><span class="tw"><svg width="6" height="10"><path d="M1 1l4 4-4 4" class="k" style="stroke-width:2px"/></svg></span><span class="ic"><svg width="16" height="16"><use href="#org"/></svg></span>Origin001</li>
    <li class="l2"><span class="tw"><svg width="6" height="10"><path d="M1 1l4 4-4 4" class="k" style="stroke-width:2px"/></svg></span><span class="ic"><svg width="16" height="16"><path d="M1 4l6-3 8 2v7l-6 4-8-3 4-3-4-1z" fill="#a5a5a5" stroke="#808080"/><path d="M9 7h4v3h2l-4 5-4-5h2z" fill="#fff"/></svg></span>Pad</li>
    <li class="l1"><span class="tw"><svg width="6" height="10"><path d="M1 1l4 4-4 4" class="k" style="stroke-width:2px"/></svg></span><span class="ic"><svg width="16" height="16"><path d="M1 13Q2 4 8 2l7 0v2Q9 6 8 13z" fill="url(#gb)" stroke="#173a6d"/></svg></span>Fillet001</li>
    <li class="l1 hot"><span class="tw"><svg width="10" height="6"><use href="#chev"/></svg></span><span class="ic"><svg width="16" height="16"><use href="#body"/></svg></span>Body002</li>
    <li class="l2"><span class="tw"><svg width="6" height="10"><path d="M1 1l4 4-4 4" class="k" style="stroke-width:2px"/></svg></span><span class="ic"><svg width="16" height="16"><use href="#org"/></svg></span>Origin002</li>
    <li class="l2 pick"><span class="tw"></span><span class="ic"><svg width="16" height="16" viewBox="0 0 62 62"><use href="#sk" stroke="#517dbd"/></svg></span>Sketch002</li>
   </ul>
   <svg class="treelines" width="80" height="230"><path d="M15.500 22v5M19 31.500h7M35.500 40v134M39 49.500h7M55.500 58v32M59 67.500h7M59 85.500h7M39 103.500h7M55.500 112v32M59 121.500h7M59 139.500h7M39 157.500h7M39 175.500h7M55.500 184v28h11M59 193.500h7" fill="none" stroke="#3b4452" opacity=".8"/></svg>
   <svg class="cube" width="181" height="165" viewBox="0 15 543 495">
    <g fill="#e2e9f0"><path d="M269 66L295 39L322 66zM269 462H322L295 489zM72 264L97 239V289zM492 236L520 264L492 292z"/><path d="M132 134L134 105L141 110Q178 72 228 59L234 73Q184 86 150 120L158 133zM456 134L455 105L448 110Q410 72 362 59L356 73Q406 86 440 120L430 133z"/>
    <rect x="183" y="153" width="222" height="222" rx="30"/></g>
    <g fill="#fafcfe"><path d="M187 180L210 153H226L206 198zM401 180L378 153H362L382 198zM187 348L210 375H226L206 332zM401 348L378 375H362L382 332z"/><rect x="206" y="177" width="175" height="175" rx="18"/></g>
    <g fill="none" stroke-width="5"><path d="M245 188V191H343V188M368 214V310" stroke="#cfd4da"/><path d="M220 214V312" stroke="#cfcfee"/><path d="M245 340V337H343V340" stroke="#cfe4d2"/></g>
    <path d="M198 168L214 184M391 168L374 184M391 362L374 346" stroke="#3c4656" stroke-width="3"/><path d="M214 342L186 370" stroke="#ff2020" stroke-width="3"/>
    <text x="231" y="284" font-family="DejaVu Sans Condensed,DejaVu Sans,sans-serif" font-size="54">Right</text>
    <text x="172" y="392" font-family="DejaVu Sans Condensed,sans-serif" font-size="28" fill="#ff1010">X</text>
    <path d="M373 414L407 404L441 414V462L407 471L373 462z" fill="#bfbfbf"/><path d="M407 426L441 414V462L407 471z" fill="#dcdcdc"/><path d="M373 414L407 404L441 414L407 426z" fill="#f2f2f2"/><path d="M373 414L407 404L441 414V462L407 471L373 462z" fill="none" stroke="#777" stroke-width="2"/>
    <path d="M452 426H496L474 448z" fill="#484848"/>
   </svg>
   <svg class="axes" width="60" height="80" viewBox="483 93 180 240">
    <path d="M537 207V145" stroke="#20209a" stroke-width="5"/><path d="M526 150L537 119L548 150z" fill="#20209a"/><path d="M537 207H600" stroke="#208a20" stroke-width="4"/><path d="M593 197L625 207L593 217z" fill="#208a20"/><path d="M525 207L537 195L549 207L537 219z" fill="#8a2020"/>
    <g font-family="DejaVu Sans Condensed,sans-serif" font-size="27"><text x="544" y="122">Z</text><text x="545" y="206">X</text><text x="629" y="206">Y</text></g>
   </svg>
  </div>
  <div class="doctabs d-flex flex-shrink-0">
   <button class="doctab d-flex align-items-center"><svg width="16" height="16"><use href="#logo"/></svg><span class="flex-grow-1 text-start text-nowrap" style="padding-left:9px">Página de inicio</span><svg width="10" height="10"><path d="M0 0l10 10M10 0L0 10" stroke="#15181d" stroke-width="1.600"/></svg></button>
   <button class="doctab on d-flex align-items-center"><svg width="16" height="16"><use href="#logo"/></svg><span class="flex-grow-1 text-start" style="padding-left:9px">rin : 1</span><svg width="10" height="10"><path d="M0 0l10 10M10 0L0 10" stroke="#3f3f3f" stroke-width="1.600"/></svg></button>
  </div>
 </div>

 <aside class="rightbar d-flex flex-column align-items-center flex-shrink-0">
  <span class="dots"></span>
  <button class="tool" aria-label="Coincidencia"><svg width="22" height="22" viewBox="0 0 66 66"><use href="#rd" x="33" y="33"/></svg></button>
  <button class="tool" aria-label="Punto en objeto"><svg width="22" height="22" viewBox="0 0 66 66"><path class="red" d="M8 62Q8 30 20 16Q40 5 66 6"/><circle cx="19" cy="17" r="12" fill="#dc1414" stroke="#520606" stroke-width="2"/></svg></button>
  <button class="tool" aria-label="Vertical"><svg width="22" height="22" viewBox="0 0 66 66"><path class="red" style="stroke-width:10px" d="M33 0v66"/></svg></button>
  <button class="tool" aria-label="Horizontal"><svg width="22" height="22" viewBox="0 0 66 66"><path class="red" style="stroke-width:10px" d="M0 33h66"/></svg></button>
  <button class="tool" aria-label="Paralelo"><svg width="22" height="22" viewBox="0 0 66 66"><path class="red" style="stroke-width:9px" d="M4 46L46 4M20 62L62 20"/></svg></button>
  <button class="tool" aria-label="Perpendicular"><svg width="22" height="22" viewBox="0 0 66 66"><path class="red" style="stroke-width:12px" d="M33 4v52M0 54h66"/></svg></button>
  <button class="tool" aria-label="Tangente"><svg width="22" height="22" viewBox="0 0 66 66"><path class="red" style="stroke-width:8px" d="M20 4L62 46M1 23Q40 26 43 63"/></svg></button>
  <button class="tool" aria-label="Igualdad"><svg width="22" height="22" viewBox="0 0 66 66"><path class="red" style="stroke-width:11px" d="M11 21h44M11 46h44"/></svg></button>
  <button class="tool" aria-label="Simetría de puntos"><svg width="22" height="22" viewBox="0 0 66 66"><path class="red" style="stroke-width:12px" d="M2 13L20 33L2 53M64 13L46 33L64 53"/></svg></button>
  <button class="tool" aria-label="Bloqueo"><svg width="22" height="22" viewBox="0 0 66 66"><circle cx="33" cy="33" r="32" fill="#111"/><circle cx="33" cy="33" r="25" fill="#fff" stroke="#d40c10" stroke-width="7"/><path d="M15 20L51 46" stroke="#d40c10" stroke-width="8"/></svg></button>
  <span class="hrule"></span>
  <button class="tool" aria-label="Fijar"><svg width="22" height="22" viewBox="0 0 66 66"><path d="M11 32h44v32H11z" fill="#d40c10" stroke="#520606" stroke-width="2"/><path class="red" d="M18 32V18Q20 4 33 4T48 18V32"/><path d="M16 42h34M16 52h34" stroke="#a00808" stroke-width="3"/></svg></button>
  <button class="tool" aria-label="Distancia horizontal"><svg width="22" height="22" viewBox="0 0 66 66"><path class="red" style="stroke-width:7px" d="M4 14v38M62 14v38M4 33h58"/></svg></button>
  <button class="tool" aria-label="Distancia vertical"><svg width="22" height="22" viewBox="0 0 66 66"><path class="red" style="stroke-width:7px" d="M14 4h38M14 62h38M33 4v58"/></svg></button>
  <button class="tool" aria-label="Distancia"><svg width="22" height="22" viewBox="0 0 66 66"><path class="red" style="stroke-width:8px" d="M14 52L52 14"/><path d="M2 64L6 38L28 60zM64 2L38 6L60 28z" fill="#d40c10"/></svg></button>
  <div class="radial"><button class="tool" style="width:32px" aria-label="Radio"><svg width="22" height="22" viewBox="0 0 66 66"><circle class="red" style="stroke-width:5px" cx="33" cy="33" r="30"/><path class="red" d="M33 36L56 12"/></svg></button><button class="drop" style="width:22px;padding-top:23px" aria-label="Más"><svg width="10" height="6"><use href="#chev"/></svg></button></div>
  <button class="tool" aria-label="Ángulo"><svg width="22" height="22" viewBox="0 0 66 66"><path class="red" style="stroke-width:5px" d="M66 4L4 33L66 62M42 15Q50 33 42 51"/></svg></button>
  <button class="tool" aria-label="Refracción"><svg width="22" height="22" viewBox="0 0 66 66"><path d="M4 4L33 30L42 64" fill="none" stroke="#f0d800" stroke-width="7"/><path class="red" style="stroke-width:5px" d="M0 33h66"/></svg></button>
  <span class="hrule"></span>
  <button class="tool" aria-label="Alternar referencia"><svg width="22" height="22" viewBox="0 0 66 66"><path d="M29 3h34v34H29z" class="b"/><path d="M4 29h34v34H4z" fill="#2c323c" stroke="#d40c10" stroke-width="7"/></svg></button>
 </aside>
</main>

<footer class="status d-flex align-items-center justify-content-end flex-shrink-0">
 <span class="vline"></span><button class="pbtn cad d-flex align-items-center justify-content-center gap-2"><svg width="10" height="14" viewBox="0 0 10 14"><rect x="1" y="1" width="8" height="12" rx="4" fill="none" stroke="#3a3d42" stroke-width="1.500"/><path d="M5 3v3" stroke="#3a3d42" stroke-width="1.500"/></svg>CAD</button><span class="vline"></span><span class="dim text-nowrap">28.17 mm x 15.57 mm</span>
</footer>
<div class="taskbar d-flex flex-shrink-0"><div></div></div>
<script src="https://cdn.jsdelivr.net/npm/bootstrap@5.3.0/dist/js/bootstrap.bundle.min.js"></script>
</body>
</html>
